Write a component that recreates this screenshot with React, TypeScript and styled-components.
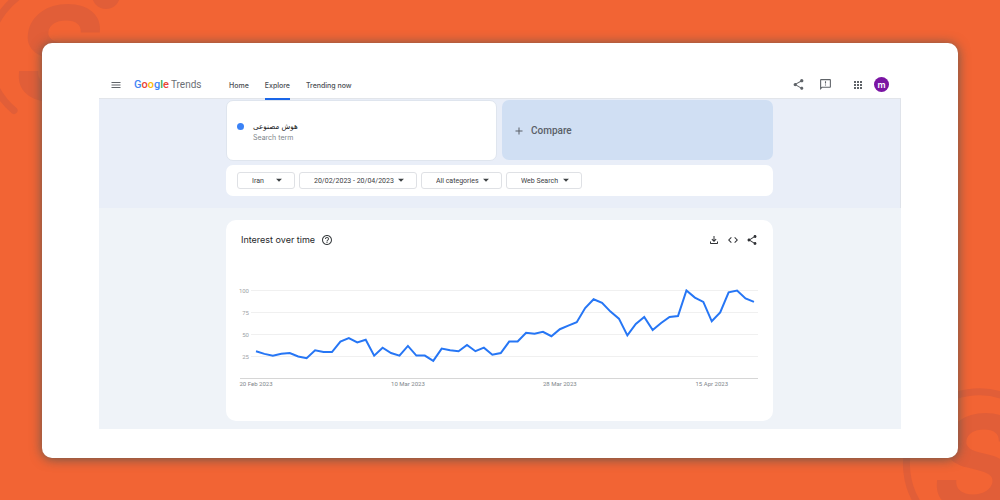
import React from "react";
import styled, { createGlobalStyle } from "styled-components";
import {
  MdAdd,
  MdApps,
  MdArrowDropDown,
  MdCode,
  MdHelpOutline,
  MdMenu,
  MdOutlineFeedback,
  MdOutlineFileDownload,
  MdShare,
} from "react-icons/md";

const GlobalStyle = createGlobalStyle`
  *, *::before, *::after { box-sizing: border-box; }
  body { margin: 0; background: #f26434; }
  button, select { font: inherit; color: inherit; }
  h1, h2, p { margin: 0; font-weight: 400; }
  svg { display: block; flex: none; }
`;

const Page = styled.div`
  position: relative;
  display: flex;
  min-height: 100vh;
  padding: 43px 42px 42px;
  overflow: hidden;
  font-family: Inter, Roboto, "DejaVu Sans", sans-serif;
  font-size: 7px;
  line-height: 10px;
  color: #3c4043;
`;

const Watermark = styled.svg<{ $corner: "start" | "end" }>`
  position: absolute;
  ${({ $corner }) =>
    $corner === "start" ? "left: -20px; top: -24px;" : "right: -82px; bottom: -69px;"}
  width: 184px;
  height: 184px;
  color: #e15e38;
`;

const Frame = styled.main`
  position: relative;
  flex: 1;
  padding: 27px 57px 29px;
  border-radius: 10px;
  background: #fff;
  box-shadow: 0 1px 12px rgba(60, 84, 84, 0.8);
`;

const Trends = styled.div`
  background: #eff3f8;
`;

const Header = styled.header`
  display: flex;
  align-items: center;
  height: 29px;
  padding: 1px 12px 0 11px;
  border-bottom: 1px solid #e2e5ea;
  background: #fff;
`;

const IconButton = styled.button`
  display: grid;
  place-items: center;
  padding: 0;
  border: 0;
  background: none;
  cursor: pointer;
`;

const Logo = styled.a`
  display: flex;
  align-items: baseline;
  gap: 2px;
  width: 95px;
  margin-left: 12px;
  padding-top: 1px;
  font-family: Roboto, sans-serif;
  font-size: 10px;
  line-height: 14px;
  color: #6b6f74;
  text-decoration: none;
`;

const Brand = styled.span`
  font-size: 11px;
  font-weight: 500;
`;

const Letter = styled.span<{ $color: string }>`
  color: ${({ $color }) => $color};
`;

const Nav = styled.nav`
  display: flex;
  align-self: stretch;
  gap: 16px;
  flex: 1;
`;

const NavLink = styled.a<{ $active?: boolean }>`
  display: flex;
  align-items: center;
  height: 29px;
  padding-top: 2px;
  border-bottom: 2px solid ${({ $active }) => ($active ? "#1a66e8" : "transparent")};
  font-weight: 500;
  color: #4a4e53;
  text-decoration: none;
`;

const Tools = styled.div`
  display: flex;
  align-items: center;
  color: #5f6368;
`;

const ToolGroup = styled.div`
  display: flex;
  gap: 14px;
  margin-right: 20px;
`;

const Avatar = styled.button`
  width: 15px;
  height: 15px;
  margin-left: 10px;
  padding: 0;
  border: 0;
  border-radius: 50%;
  background: #7a14a3;
  color: #fff;
  font-size: 9px;
  font-weight: 600;
  line-height: 14px;
`;

const Hero = styled.section`
  padding: 1px 127px 12px 127px;
  border-right: 1px solid #dfe3ea;
  background: #e9eef8;
`;

const Terms = styled.div`
  display: grid;
  grid-template-columns: 1fr 1fr;
  gap: 5px;
  margin-bottom: 4px;
`;

const TermCard = styled.div`
  display: flex;
  align-items: center;
  gap: 9px;
  height: 61px;
  padding: 2px 10px 0;
  border: 1px solid #dfe5ee;
  border-radius: 7px;
  background: #fff;
`;

const Dot = styled.span`
  width: 7px;
  height: 7px;
  margin-bottom: 10px;
  border-radius: 50%;
  background: #3b82f6;
`;

const TermName = styled.p`
  font-family: "DejaVu Sans Condensed", "DejaVu Sans", sans-serif;
  font-size: 8px;
  line-height: 12px;
  color: #202124;
`;

const TermKind = styled.p`
  color: #80868b;
`;

const CompareButton = styled.button`
  display: flex;
  align-items: center;
  gap: 6px;
  height: 60px;
  padding: 2px 11px 0;
  border: 0;
  border-radius: 7px;
  background: #d0dff3;
  font-family: Roboto, sans-serif;
  font-size: 10px;
  font-weight: 500;
  color: #5a6068;
`;

const Filters = styled.form`
  display: flex;
  align-items: center;
  gap: 4px;
  height: 31px;
  padding: 0 11px;
  border-radius: 7px;
  background: #fff;
`;

const Picker = styled.label<{ $width: number }>`
  position: relative;
  width: ${({ $width }) => $width}px;
`;

const PickerSelect = styled.select`
  appearance: none;
  display: block;
  width: 100%;
  height: 17px;
  padding: 1px 0 0 14px;
  border: 1px solid #dfe1e5;
  border-radius: 3px;
  background: #fff;
  font-family: Roboto, sans-serif;
`;

const Caret = styled(MdArrowDropDown)`
  position: absolute;
  top: 1px;
  right: 9px;
  pointer-events: none;
`;

const Results = styled.section`
  padding: 12px 128px 8px 127px;
`;

const ChartCard = styled.article`
  height: 201px;
  border-radius: 10px;
  background: #fff;
`;

const ChartHeader = styled.div`
  display: flex;
  align-items: center;
  gap: 6px;
  padding: 13px 15px 0;
  margin-bottom: 34px;
`;

const ChartTitle = styled.h2`
  font-size: 9px;
  line-height: 13px;
  color: #26282b;
`;

const ChartActions = styled.div`
  display: flex;
  gap: 7px;
  margin-left: auto;
  color: #303236;
`;

const Chart = styled.svg`
  width: 100%;
  height: auto;
`;

const AxisText = styled.text`
  font-family: Roboto, sans-serif;
  font-size: 6px;
`;

const filters = [
  { label: "Region", value: "Iran", width: 58 },
  { label: "Time range", value: "20/02/2023 - 20/04/2023", width: 118 },
  { label: "Category", value: "All categories", width: 81 },
  { label: "Search type", value: "Web Search", width: 76 },
];

const interest = [
  31, 28, 26, 28, 29, 25, 23, 32, 30, 30, 42, 46, 41, 44, 26, 35, 29, 26, 37, 26,
  26, 20, 34, 32, 31, 38, 31, 35, 27, 29, 42, 42, 52, 51, 53, 48, 56, 60, 64, 80,
  90, 86, 76, 68, 49, 62, 70, 55, 63, 70, 71, 100, 92, 87, 65, 75, 98, 100, 91, 87,
];

const dates = [
  { day: 0, label: "20 Feb 2023" },
  { day: 18, label: "10 Mar 2023" },
  { day: 36, label: "28 Mar 2023" },
  { day: 54, label: "15 Apr 2023" },
];

const dayX = (day: number) => 30 + day * 8.44;
const valueY = (value: number) => 98.5 - value * 0.88;

function BrandMark({ corner }: { corner: "start" | "end" }) {
  return (
    <Watermark $corner={corner} viewBox="-20 -24 184 184" aria-hidden="true">
      <path
        d="M14 110.5 A72.5 72.5 0 0 1 102 -4.5"
        fill="none"
        stroke="currentColor"
        strokeWidth="7"
        strokeLinecap="round"
      />
      <circle cx="106" cy="-5" r="14" fill="currentColor" />
      <text
        x="58"
        y="101"
        textAnchor="middle"
        fill="currentColor"
        fontFamily="Inter, sans-serif"
        fontWeight="700"
        fontStyle="italic"
        fontSize="132"
      >
        S
      </text>
    </Watermark>
  );
}

function InterestChart() {
  return (
    <Chart viewBox="0 0 547 116" role="img" aria-label="Interest over time">
      {[100, 75, 50, 25, 0].map((tick) => (
        <React.Fragment key={tick}>
          <line
            x1={tick ? 25 : 14}
            x2="532"
            y1={valueY(tick)}
            y2={valueY(tick)}
            stroke={tick ? "#f0f0f0" : "#d6d6d6"}
          />
          {tick > 0 && (
            <AxisText x="23" y={valueY(tick) + 2} textAnchor="end" fill="#a0a3a6">
              {tick}
            </AxisText>
          )}
        </React.Fragment>
      ))}
      <polyline
        points={interest.map((v, i) => `${dayX(i)},${valueY(v)}`).join(" ")}
        fill="none"
        stroke="#2676f5"
        strokeWidth="2"
      />
      {dates.map(({ day, label }) => (
        <AxisText key={label} x={dayX(day)} y="106" textAnchor="middle" fill="#80868b">
          {label}
        </AxisText>
      ))}
    </Chart>
  );
}

export default function App() {
  return (
    <Page>
      <GlobalStyle />
      <BrandMark corner="start" />
      <BrandMark corner="end" />
      <Frame>
        <Trends>
          <Header>
            <IconButton aria-label="Main menu">
              <MdMenu size={12} color="#5f6368" />
            </IconButton>
            <Logo href="#home">
              <Brand>
                <Letter $color="#4285f4">G</Letter>
                <Letter $color="#ea4335">o</Letter>
                <Letter $color="#fbbc05">o</Letter>
                <Letter $color="#4285f4">g</Letter>
                <Letter $color="#34a853">l</Letter>
                <Letter $color="#ea4335">e</Letter>
              </Brand>
              <span>Trends</span>
            </Logo>
            <Nav>
              <NavLink href="#home">Home</NavLink>
              <NavLink href="#explore" $active aria-current="page">
                Explore
              </NavLink>
              <NavLink href="#trending">Trending now</NavLink>
            </Nav>
            <Tools>
              <ToolGroup>
                <IconButton aria-label="Share">
                  <MdShare size={13} />
                </IconButton>
                <IconButton aria-label="Send feedback">
                  <MdOutlineFeedback size={13} />
                </IconButton>
              </ToolGroup>
              <IconButton aria-label="Google apps">
                <MdApps size={12} />
              </IconButton>
              <Avatar aria-label="Account">m</Avatar>
            </Tools>
          </Header>
          <Hero>
            <Terms>
              <TermCard>
                <Dot />
                <div>
                  <TermName lang="fa" dir="rtl">
                    هوش مصنوعی
                  </TermName>
                  <TermKind>Search term</TermKind>
                </div>
              </TermCard>
              <CompareButton>
                <MdAdd size={12} />
                Compare
              </CompareButton>
            </Terms>
            <Filters>
              {filters.map(({ label, value, width }) => (
                <Picker key={label} $width={width}>
                  <PickerSelect aria-label={label}>
                    <option>{value}</option>
                  </PickerSelect>
                  <Caret size={14} />
                </Picker>
              ))}
            </Filters>
          </Hero>
          <Results>
            <ChartCard>
              <ChartHeader>
                <ChartTitle>Interest over time</ChartTitle>
                <IconButton aria-label="Help">
                  <MdHelpOutline size={12} />
                </IconButton>
                <ChartActions>
                  <IconButton aria-label="Download">
                    <MdOutlineFileDownload size={12} />
                  </IconButton>
                  <IconButton aria-label="Embed">
                    <MdCode size={12} />
                  </IconButton>
                  <IconButton aria-label="Share chart">
                    <MdShare size={12} />
                  </IconButton>
                </ChartActions>
              </ChartHeader>
              <InterestChart />
            </ChartCard>
          </Results>
        </Trends>
      </Frame>
    </Page>
  );
}
